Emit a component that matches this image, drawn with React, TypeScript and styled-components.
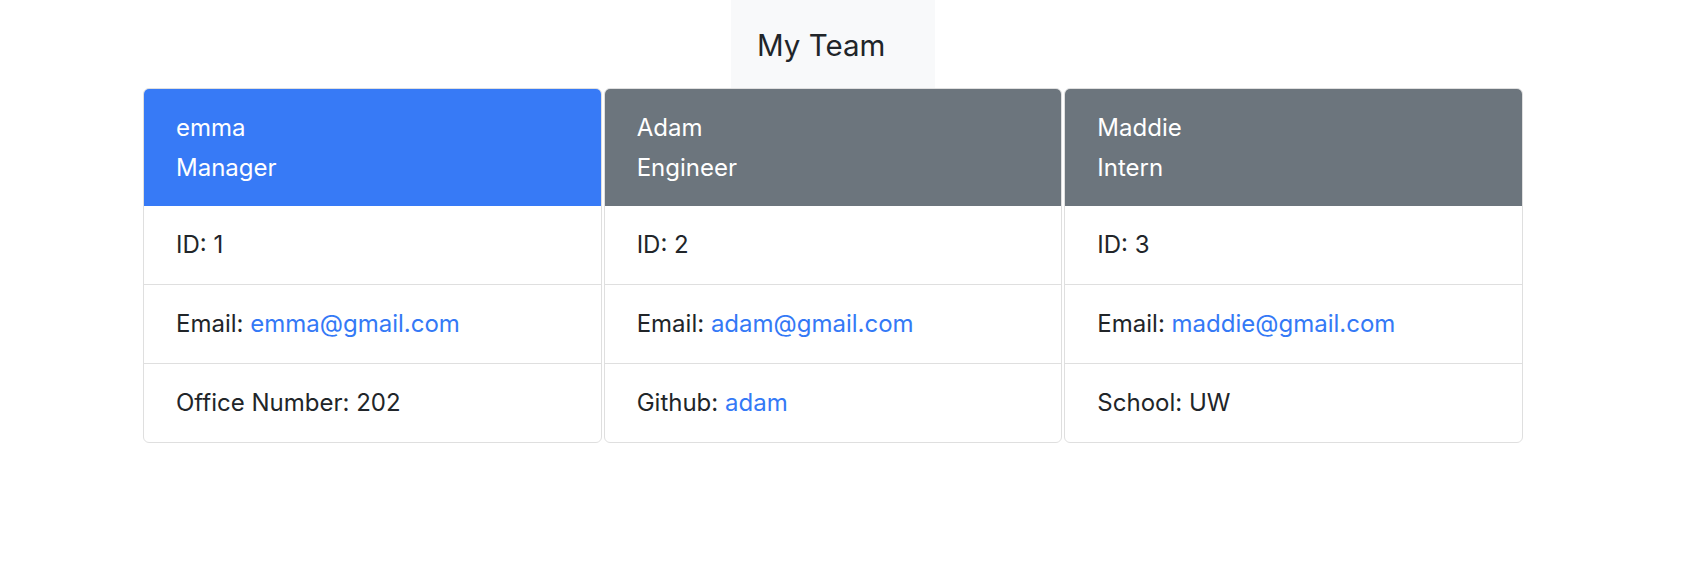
import React from 'react';
import styled, { createGlobalStyle } from 'styled-components';

const GlobalStyle = createGlobalStyle`
  body {
    margin: 0;
    background: #fff;
    font-family: Inter, "Noto Sans", "Liberation Sans", sans-serif;
    color: #212529;
  }
`;

const Page = styled.div`
  width: 1666px;
`;

const TitleBar = styled.div`
  display: flex;
  justify-content: center;
`;

const TitleBox = styled.h1`
  width: 204px;
  height: 88px;
  box-sizing: border-box;
  margin: 0;
  padding: 27px 0 0 26px;
  background: #f8f9fa;
  font-size: 29.5px;
  font-weight: 400;
  line-height: 36px;
  color: #212529;
`;

const Grid = styled.div`
  width: 1380px;
  margin: 0 auto;
  display: grid;
  grid-template-columns: repeat(3, 1fr);
  column-gap: 2px;
`;

const Card = styled.div`
  border: 1px solid #dfdfdf;
  border-radius: 6px;
  overflow: hidden;
  background: #fff;
`;

const CardHeader = styled.div<{ $tone: 'primary' | 'secondary' }>`
  background: ${({ $tone }) => ($tone === 'primary' ? '#377af6' : '#6c757d')};
  color: #fff;
  padding: 19px 32px 18px;
  font-size: 24px;
  line-height: 40px;
`;

const Row = styled.div`
  padding: 21px 32px;
  font-size: 24px;
  line-height: 36px;
  border-top: 1px solid #dfdfdf;

  &:first-of-type {
    border-top: none;
  }
`;

const Link = styled.a`
  color: #3479f6;
  text-decoration: none;
`;

type Member = {
  name: string;
  role: string;
  id: number;
  email: string;
  tone: 'primary' | 'secondary';
  extraLabel: string;
  extra: string;
  extraIsLink?: boolean;
};

const team: Member[] = [
  { name: 'emma', role: 'Manager', id: 1, email: 'emma@gmail.com', tone: 'primary', extraLabel: 'Office Number', extra: '202' },
  { name: 'Adam', role: 'Engineer', id: 2, email: 'adam@gmail.com', tone: 'secondary', extraLabel: 'Github', extra: 'adam', extraIsLink: true },
  { name: 'Maddie', role: 'Intern', id: 3, email: 'maddie@gmail.com', tone: 'secondary', extraLabel: 'School', extra: 'UW' },
];

const App = () => {
  return (
    <>
      <GlobalStyle />
      <Page>
        <TitleBar>
          <TitleBox>My Team</TitleBox>
        </TitleBar>
        <Grid>
          {team.map((m) => (
            <Card key={m.id}>
              <CardHeader $tone={m.tone}>
                <div>{m.name}</div>
                <div>{m.role}</div>
              </CardHeader>
              <div>
                <Row>ID: {m.id}</Row>
                <Row>
                  Email: <Link href={`mailto:${m.email}`}>{m.email}</Link>
                </Row>
                <Row>
                  {m.extraLabel}:{' '}
                  {m.extraIsLink ? <Link href="#">{m.extra}</Link> : m.extra}
                </Row>
              </div>
            </Card>
          ))}
        </Grid>
      </Page>
    </>
  );
};

export default App;
